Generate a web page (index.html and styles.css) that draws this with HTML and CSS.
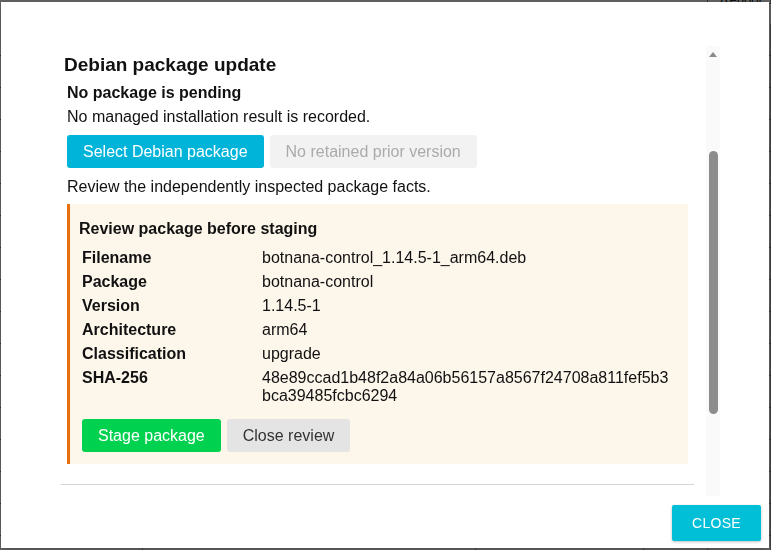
FILE: index.html
```html
<!DOCTYPE html>
<html lang="en">
<head>
    <meta charset="UTF-8">
    <meta name="viewport" content="width=device-width, initial-scale=1.0">
    <title>Debian package update</title>
    <link rel="stylesheet" href="styles.css">
</head>
<body>
    <div class="page">
        <div class="toolbar"><span class="toolbar-btn">Reboot</span></div>
        <table class="grid">
            <tr><td></td><td></td><td></td><td></td><td></td></tr>
            <tr><td></td><td></td><td></td><td></td><td></td></tr>
            <tr><td></td><td></td><td></td><td></td><td></td></tr>
            <tr><td></td><td></td><td></td><td></td><td></td></tr>
            <tr><td></td><td></td><td></td><td></td><td></td></tr>
            <tr><td></td><td></td><td></td><td></td><td></td></tr>
            <tr><td></td><td></td><td></td><td></td><td></td></tr>
            <tr><td></td><td></td><td></td><td></td><td></td></tr>
            <tr><td></td><td></td><td></td><td></td><td></td></tr>
            <tr><td></td><td></td><td></td><td></td><td></td></tr>
            <tr><td></td><td></td><td></td><td></td><td></td></tr>
            <tr><td></td><td></td><td></td><td></td><td></td></tr>
            <tr><td></td><td></td><td></td><td></td><td></td></tr>
            <tr><td></td><td></td><td></td><td></td><td></td></tr>
            <tr><td></td><td></td><td></td><td></td><td></td></tr>
            <tr><td></td><td></td><td></td><td></td><td></td></tr>
            <tr><td></td><td></td><td></td><td></td><td></td></tr>
            <tr><td></td><td></td><td></td><td></td><td></td></tr>
            <tr><td></td><td></td><td></td><td></td><td></td></tr>
        </table>
    </div>

    <div class="overlay">
        <div class="dialog">
            <div class="dialog-body">
                <div class="dialog-content">
                    <h2>Debian package update</h2>
                    <div class="section">
                        <p class="status">No package is pending</p>
                        <p class="note">No managed installation result is recorded.</p>
                        <div class="actions">
                            <button class="btn btn-primary">Select Debian package</button>
                            <button class="btn btn-disabled" disabled>No retained prior version</button>
                        </div>
                        <p class="hint">Review the independently inspected package facts.</p>

                        <div class="review">
                            <h3>Review package before staging</h3>
                            <dl class="facts">
                                <dt>Filename</dt>
                                <dd>botnana-control_1.14.5-1_arm64.deb</dd>
                                <dt>Package</dt>
                                <dd>botnana-control</dd>
                                <dt>Version</dt>
                                <dd>1.14.5-1</dd>
                                <dt>Architecture</dt>
                                <dd>arm64</dd>
                                <dt>Classification</dt>
                                <dd>upgrade</dd>
                                <dt>SHA-256</dt>
                                <dd class="hash">48e89ccad1b48f2a84a06b56157a8567f24708a811fef5b3bca39485fcbc6294</dd>
                            </dl>
                            <div class="actions review-actions">
                                <button class="btn btn-success">Stage package</button>
                                <button class="btn btn-light">Close review</button>
                            </div>
                        </div>
                    </div>
                    <hr class="divider">
                </div>
                <div class="scrollbar">
                    <span class="scroll-arrow"></span>
                    <span class="scroll-thumb"></span>
                </div>
            </div>
            <div class="dialog-footer">
                <button class="btn-close">Close</button>
            </div>
        </div>
    </div>
</body>
</html>
```

FILE: styles.css
```css
body {
    margin: 0;
    font-family: "Liberation Sans", Arial, sans-serif;
    background-color: #fff;
    color: #111;
}

/* page behind the modal */
.page {
    height: 550px;
    overflow: hidden;
}
.toolbar {
    height: 10px;
    margin-top: -6px;
    display: flex;
    justify-content: flex-end;
}
.toolbar-btn {
    font-size: 13px;
    line-height: 10px;
    padding: 0 8px 0 12px;
    border: 1px solid #888;
    color: #222;
}
.grid {
    width: 100%;
    border-collapse: collapse;
    margin-top: 20px;
}
.grid td {
    height: 29px;
    border-bottom: 1px solid #888;
    border-right: 1px solid #aaa;
}
.grid td:nth-child(1) { width: 140px; }
.grid td:nth-child(2) { width: 330px; }
.grid td:nth-child(3) { width: 165px; }

.overlay {
    position: fixed;
    top: 0;
    left: 0;
    right: 0;
    bottom: 0;
    background: rgba(0, 0, 0, 0.6);
    padding: 2px 2px 2px 1px;
}

.dialog {
    width: 768px;
    height: 546px;
    background: #fff;
    display: flex;
    flex-direction: column;
    box-shadow: 0 2px 10px rgba(0, 0, 0, 0.3);
}
.dialog-body {
    margin-top: 44px;
    height: 450px;
    display: flex;
}
.dialog-content {
    margin-left: 60px;
    width: 633px;
    overflow: hidden;
}
.dialog-content h2 {
    margin: 8px 0 0 3px;
    font-size: 19px;
    line-height: 22px;
    color: #111;
}

.section {
    margin: 8px 6px 0 6px;
    font-size: 16px;
    line-height: 18px;
}
.section p {
    margin: 0;
}
.status {
    font-weight: bold;
}
.note {
    margin-top: 6px !important;
}
.hint {
    margin-top: 10px !important;
}

.actions {
    display: flex;
    gap: 6px;
    margin-top: 9px;
}
.btn {
    font-family: inherit;
    font-size: 16px;
    line-height: 19px;
    padding: 7px 16px;
    border: none;
    border-radius: 3px;
    cursor: pointer;
}
.btn-primary {
    background-color: #00b4d9;
    color: #fff;
}
.btn-disabled {
    background-color: #f2f2f2;
    color: #ababab;
    cursor: default;
}
.btn-success {
    background-color: #00d14f;
    color: #fff;
}
.btn-light {
    background-color: #e4e4e4;
    color: #333;
}

.review {
    margin-top: 8px;
    background-color: #fdf6eb;
    border-left: 3px solid #e8700c;
    padding: 16px 11px 12px 9px;
}
.review h3 {
    margin: 0;
    font-size: 16px;
    line-height: 18px;
    color: #111;
}
.facts {
    display: grid;
    grid-template-columns: 180px 412px;
    row-gap: 6px;
    margin: 11px 0 0 3px;
}
.facts dt {
    font-weight: bold;
}
.facts dd {
    margin: 0;
}
.hash {
    word-break: break-all;
}
.review-actions {
    margin: 14px 0 0 3px;
}

.divider {
    margin: 20px 0 0 0;
    border: none;
    border-top: 1px solid #d6d6d6;
}

/* scroll track drawn beside the content */
.scrollbar {
    margin-left: 12px;
    width: 14px;
    background: #fafafa;
    display: flex;
    flex-direction: column;
    align-items: flex-start;
}
.scroll-arrow {
    margin: 6px 0 0 3px;
    width: 0;
    height: 0;
    border-left: 4.5px solid transparent;
    border-right: 4.5px solid transparent;
    border-bottom: 5px solid #8a8a8a;
}
.scroll-thumb {
    margin: 94px 0 0 3px;
    width: 9px;
    height: 263px;
    border-radius: 5px;
    background: #8c8c8c;
}

.dialog-footer {
    display: flex;
    justify-content: flex-end;
    padding: 9px 8px 0 0;
}
.btn-close {
    height: 36px;
    padding: 0 20px;
    font-family: inherit;
    font-size: 14px;
    text-transform: uppercase;
    letter-spacing: 0.3px;
    color: #fff;
    background-color: #00bfd6;
    border: none;
    border-radius: 2px;
    box-shadow: 0 1px 3px rgba(0, 0, 0, 0.25);
    cursor: pointer;
}
```
